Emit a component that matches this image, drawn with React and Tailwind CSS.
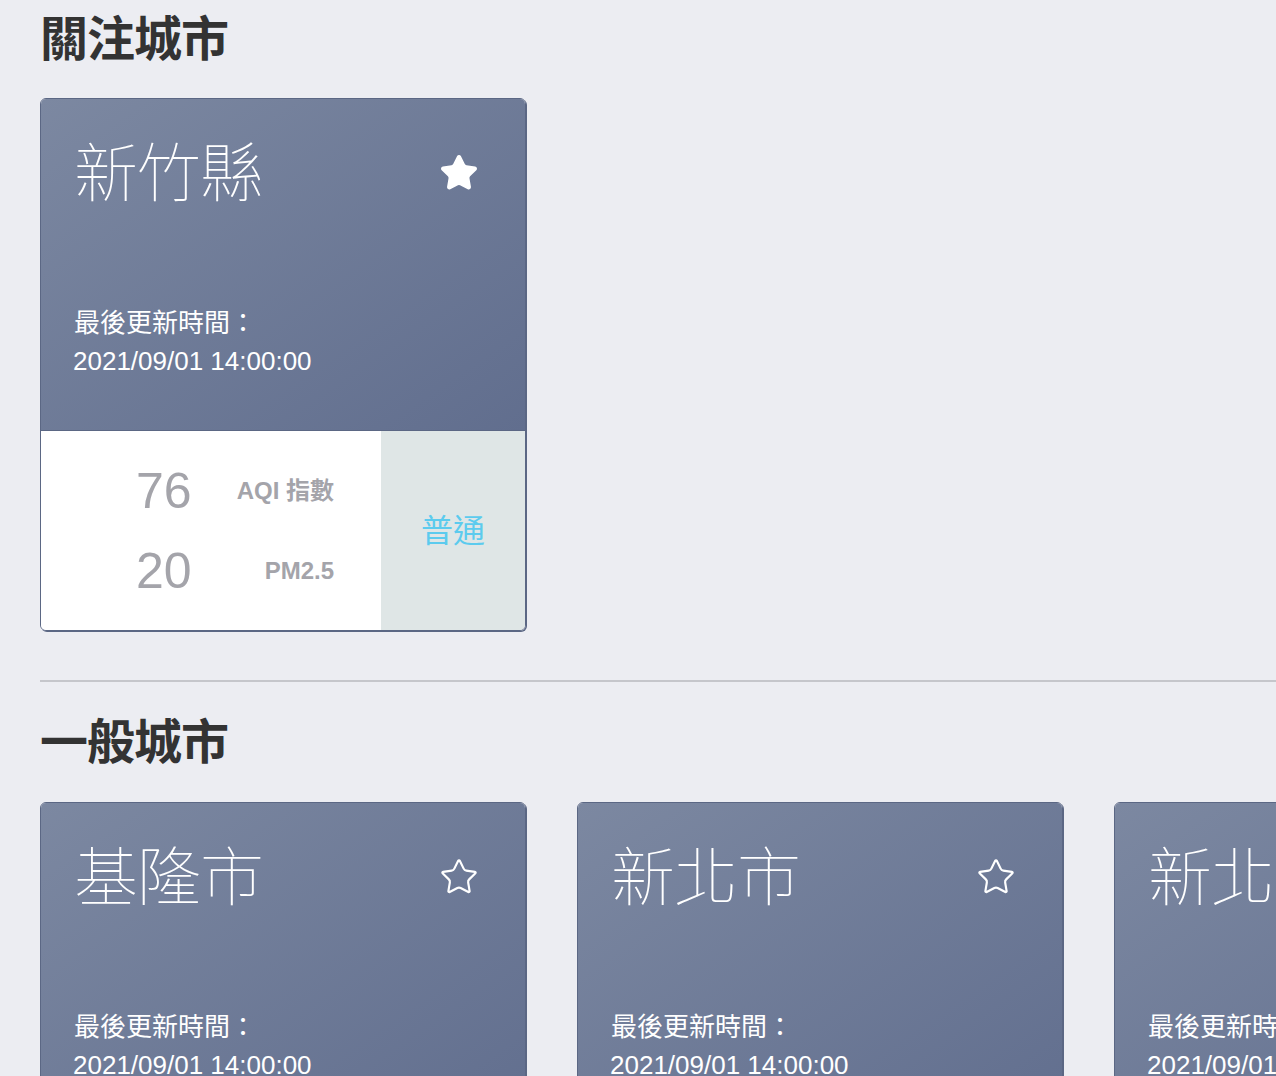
import React from "react";

function StarIcon({ filled }) {
  return (
    <svg
      width="40"
      height="40"
      viewBox="0 0 24 24"
      fill={filled ? "white" : "none"}
      stroke="white"
      strokeWidth={filled ? 1.6 : 1.3}
      strokeLinecap="round"
      strokeLinejoin="round"
    >
      <path d="M11.525 2.295a.53.53 0 0 1 .95 0l2.31 4.679a2.123 2.123 0 0 0 1.595 1.16l5.166.756a.53.53 0 0 1 .294.904l-3.736 3.638a2.123 2.123 0 0 0-.611 1.878l.882 5.14a.53.53 0 0 1-.771.56l-4.618-2.428a2.122 2.122 0 0 0-1.973 0L6.396 21.01a.53.53 0 0 1-.77-.56l.881-5.139a2.122 2.122 0 0 0-.611-1.879L2.16 9.795a.53.53 0 0 1 .294-.906l5.165-.755a2.122 2.122 0 0 0 1.597-1.16z" />
    </svg>
  );
}

function Card({ name, fav, aqi, pm, status }) {
  return (
    <div className="w-[486px] shrink-0 rounded-md border border-[#5b6784] overflow-hidden shadow-[1px_1px_0_#5b6784]">
      <div className="h-[331px] flex flex-col justify-between bg-linear-to-br from-[#7c88a1] to-[#616e8e] pl-[33px] pr-[46px] pt-[35px] pb-[50px] text-white">
        <div className="flex items-center justify-between">
          <span className="text-[64px] font-thin leading-[80px] tracking-[-1px]">{name}</span>
          <span className="mt-[-2px]">
            <StarIcon filled={fav} />
          </span>
        </div>
        <div className="text-[26px] leading-[38px]">
          <div>最後更新時間：</div>
          <div className="-ml-px">2021/09/01 14:00:00</div>
        </div>
      </div>
      <div className="flex h-[200px] border-t border-[#5b6784]">
        <div className="w-[340px] bg-white pt-[20px] pl-[95px] pr-[47px] text-[#a4a4aa]">
          <div className="flex h-[80px] items-center justify-between">
            <span className="text-[50px] leading-none">{aqi}</span>
            <span className="text-[24px] font-bold">AQI 指數</span>
          </div>
          <div className="flex h-[80px] items-center justify-between">
            <span className="text-[50px] leading-none">{pm}</span>
            <span className="text-[24px] font-bold">PM2.5</span>
          </div>
        </div>
        <div className="flex-1 bg-[#dfe6e6] flex items-center justify-center text-[32px] text-[#5ccbee]">
          {status}
        </div>
      </div>
    </div>
  );
}

export default function App() {
  return (
    <div
      className="min-h-screen bg-[#ecedf2] pl-10 overflow-hidden text-[#333]"
      style={{ fontFamily: '"Liberation Sans", "Noto Sans CJK TC", sans-serif' }}
    >
      <h2 className="pt-[4px] h-[76px] text-[48px] font-bold leading-[72px] tracking-[-1px]">關注城市</h2>
      <div className="mt-[22px] flex">
        <Card name="新竹縣" fav aqi="76" pm="20" status="普通" />
      </div>
      <div className="mt-[49px] h-[2px] bg-[#c5c6cb]" />
      <h2 className="mt-[25px] h-[72px] text-[48px] font-bold leading-[72px] tracking-[-1px]">一般城市</h2>
      <div className="mt-[23px] flex gap-[51px]">
        <Card name="基隆市" aqi="45" pm="12" status="良好" />
        <Card name="新北市" aqi="52" pm="15" status="普通" />
        <Card name="新北市" aqi="52" pm="15" status="普通" />
      </div>
    </div>
  );
}
